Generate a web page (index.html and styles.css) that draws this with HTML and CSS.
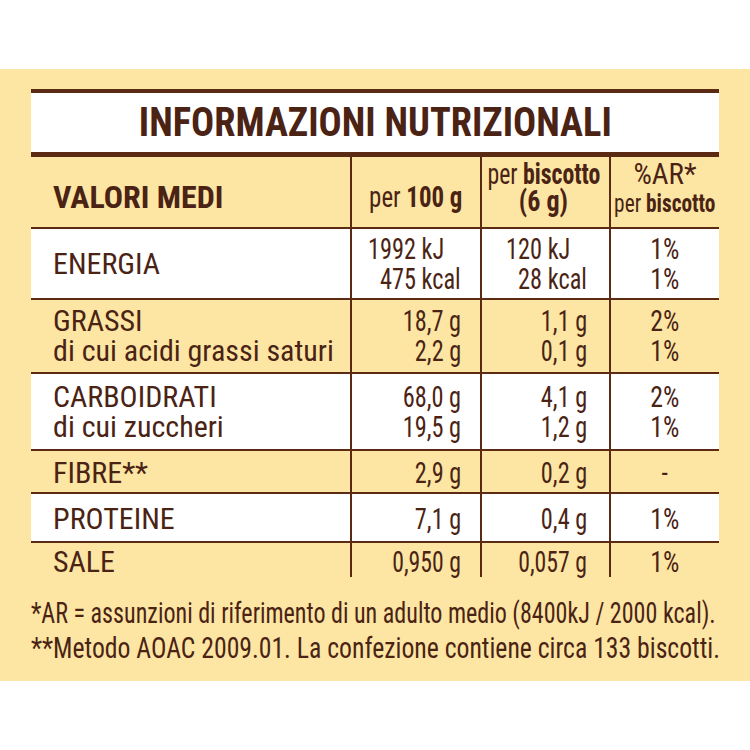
FILE: index.html
```html
<!DOCTYPE html>
<html lang="it">
<head>
<meta charset="utf-8">
<title>Informazioni nutrizionali</title>
<link rel="stylesheet" href="styles.css">
</head>
<body>
<div class="panel">
  <div class="table">
    <div class="title"><span>INFORMAZIONI NUTRIZIONALI</span></div>
    <div class="row head">
      <div class="cell label"><b>VALORI MEDI</b></div>
      <div class="cell c2"><span>per <b>100 g</b></span></div>
      <div class="cell c3"><span class="pb3">per <b>biscotto</b></span><b class="sg">(6 g)</b></div>
      <div class="cell c4"><span class="ar">%AR*</span><span class="pb">per <b>biscotto</b></span></div>
    </div>
    <div class="row white r-energia">
      <div class="cell label">ENERGIA</div>
      <div class="cell num c2"><span class="kj">1992 kJ</span><span>475 kcal</span></div>
      <div class="cell num c3"><span class="kj">120 kJ</span><span>28 kcal</span></div>
      <div class="cell pct"><span>1%</span><span>1%</span></div>
    </div>
    <div class="row r-grassi">
      <div class="cell label"><span>GRASSI</span><span>di cui acidi grassi saturi</span></div>
      <div class="cell num c2"><span>18,7 g</span><span>2,2 g</span></div>
      <div class="cell num c3"><span>1,1 g</span><span>0,1 g</span></div>
      <div class="cell pct"><span>2%</span><span>1%</span></div>
    </div>
    <div class="row white r-carbo">
      <div class="cell label"><span>CARBOIDRATI</span><span>di cui zuccheri</span></div>
      <div class="cell num c2"><span>68,0 g</span><span>19,5 g</span></div>
      <div class="cell num c3"><span>4,1 g</span><span>1,2 g</span></div>
      <div class="cell pct"><span>2%</span><span>1%</span></div>
    </div>
    <div class="row r-fibre">
      <div class="cell label">FIBRE**</div>
      <div class="cell num c2"><span>2,9 g</span></div>
      <div class="cell num c3"><span>0,2 g</span></div>
      <div class="cell pct"><span>-</span></div>
    </div>
    <div class="row white r-proteine">
      <div class="cell label">PROTEINE</div>
      <div class="cell num c2"><span>7,1 g</span></div>
      <div class="cell num c3"><span>0,4 g</span></div>
      <div class="cell pct"><span>1%</span></div>
    </div>
    <div class="row last r-sale">
      <div class="cell label">SALE</div>
      <div class="cell num c2"><span class="tight">0,950 g</span></div>
      <div class="cell num c3"><span class="tight">0,057 g</span></div>
      <div class="cell pct"><span>1%</span></div>
    </div>
  </div>
  <div class="notes">
    <p><span class="fn fn1">*AR = assunzioni di riferimento di un adulto medio (8400kJ / 2000 kcal).</span></p>
    <p><span class="fn fn2">**Metodo AOAC 2009.01. La confezione contiene circa 133 biscotti.</span></p>
  </div>
</div>
</body>
</html>
```

FILE: styles.css
```css
html, body {
  margin: 0;
  padding: 0;
  background: #ffffff;
}

body {
  font-family: Roboto, "Liberation Sans", sans-serif;
  font-stretch: 80%;
  color: #4a2314;
}

.panel {
  margin-top: 69px;
  height: 612px;
  box-sizing: border-box;
  background: #fde6a3;
  padding: 20px 31px 0 31px;
  overflow: hidden;
}

.table {
  width: 688px;
  white-space: nowrap;
}

.title {
  background: #ffffff;
  border-top: 4px solid #5a2a12;
  border-bottom: 5px solid #5a2a12;
  height: 59px;
  line-height: 59px;
  text-align: center;
  font-weight: bold;
  font-size: 40px;
}

.title span {
  display: inline-block;
  transform: scaleX(0.96);
}

.row {
  display: grid;
  grid-template-columns: 319px 130px 129px 110px;
  border-bottom: 2px solid #5a2a12;
  font-size: 30px;
  line-height: 30px;
}

.row.last {
  border-bottom: none;
}

.row.white {
  background: #ffffff;
}

.cell {
  box-sizing: border-box;
  display: flex;
  flex-direction: column;
  justify-content: center;
}

.cell + .cell {
  border-left: 2px solid #5a2a12;
}

.label {
  padding-left: 22px;
}

.num {
  align-items: flex-end;
}

.num span {
  transform: scaleX(0.81);
  transform-origin: right center;
}

.num span.tight {
  transform: scaleX(0.79);
}

.num.c2 {
  padding-right: 19px;
}

.num.c3 {
  padding-right: 22px;
}

.kj {
  margin-right: 17px;
}

.pct {
  align-items: center;
}

.pct span {
  transform: scaleX(0.86);
}

.head {
  height: 70px;
}

.head .cell {
  justify-content: flex-start;
}

.head .label {
  font-size: 32px;
  padding-top: 25px;
}

.head .c2 {
  align-items: flex-end;
  padding-right: 18px;
  padding-top: 25px;
}

.head .c2 span {
  transform: scaleX(0.83);
  transform-origin: right center;
}

.head .c3 {
  align-items: center;
  font-size: 29px;
  line-height: 27px;
  padding-top: 4px;
  padding-right: 4px;
}

.head .c3 .pb3 {
  transform: scaleX(0.82);
}

.head .c3 .sg {
  transform: scaleX(0.9);
}

.head .c4 {
  align-items: center;
  line-height: 29px;
  padding-top: 3px;
}

.head .ar {
  font-size: 29px;
}

.head .pb {
  font-size: 26px;
  transform: scaleX(0.82);
}

.r-energia { height: 69px; }
.r-grassi { height: 72px; }
.r-carbo { height: 75px; }
.r-fibre { height: 41px; }
.r-proteine { height: 47px; }
.r-sale { height: 34px; }

.r-fibre .cell, .r-proteine .cell, .r-sale .cell {
  padding-top: 3px;
}

.notes {
  margin-top: 18px;
  width: 688px;
  font-size: 30px;
  line-height: 35px;
  white-space: nowrap;
}

.notes p {
  margin: 0;
}

.fn {
  display: inline-block;
  transform-origin: left center;
}

.fn1 {
  transform: scaleX(0.802);
}

.fn2 {
  transform: scaleX(0.856);
}
```
